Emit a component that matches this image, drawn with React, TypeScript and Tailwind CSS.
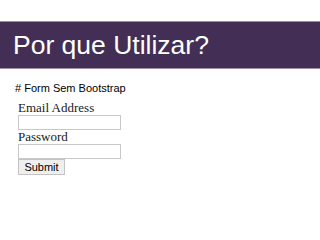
export default function App() {
    return (
        <div className="w-[320px] h-[240px] bg-white overflow-hidden">
            <div className="h-[21px]" />
            {/* Title bar */}
            <div className="h-[48px] bg-[#432f55] border-y border-[#9a8fa6] flex items-center pl-[13px]">
                <h1 className="text-[26.5px] leading-none text-white font-['Liberation_Sans',Arial,sans-serif] mt-[1px]">
                    Por que Utilizar?
                </h1>
            </div>

            <div className="pl-[15px] pt-[12px]">
                <p className="text-[11px] leading-[14px] text-black font-['Liberation_Sans',Arial,sans-serif]">
                    # Form Sem Bootstrap
                </p>

                {/* Plain form */}
                <form className="pl-[3px] pt-[6px] flex flex-col items-start font-['Liberation_Serif','Times_New_Roman',serif] text-[#1a1a1a]">
                    <label className="text-[13px] leading-[14px]">Email Address</label>
                    <input type="text" className="w-[103px] h-[15px] border border-[#c8c8c8] bg-white" />
                    <label className="text-[13px] leading-[14px]">Password</label>
                    <input type="password" className="w-[103px] h-[15px] border border-[#c8c8c8] bg-white" />
                    <button
                        type="button"
                        className="w-[47px] h-[16px] border border-[#c4c4c4] bg-[#efefef] text-[11px] leading-none text-black font-['Liberation_Sans',Arial,sans-serif]"
                    >
                        Submit
                    </button>
                </form>
            </div>
        </div>
    );
}
